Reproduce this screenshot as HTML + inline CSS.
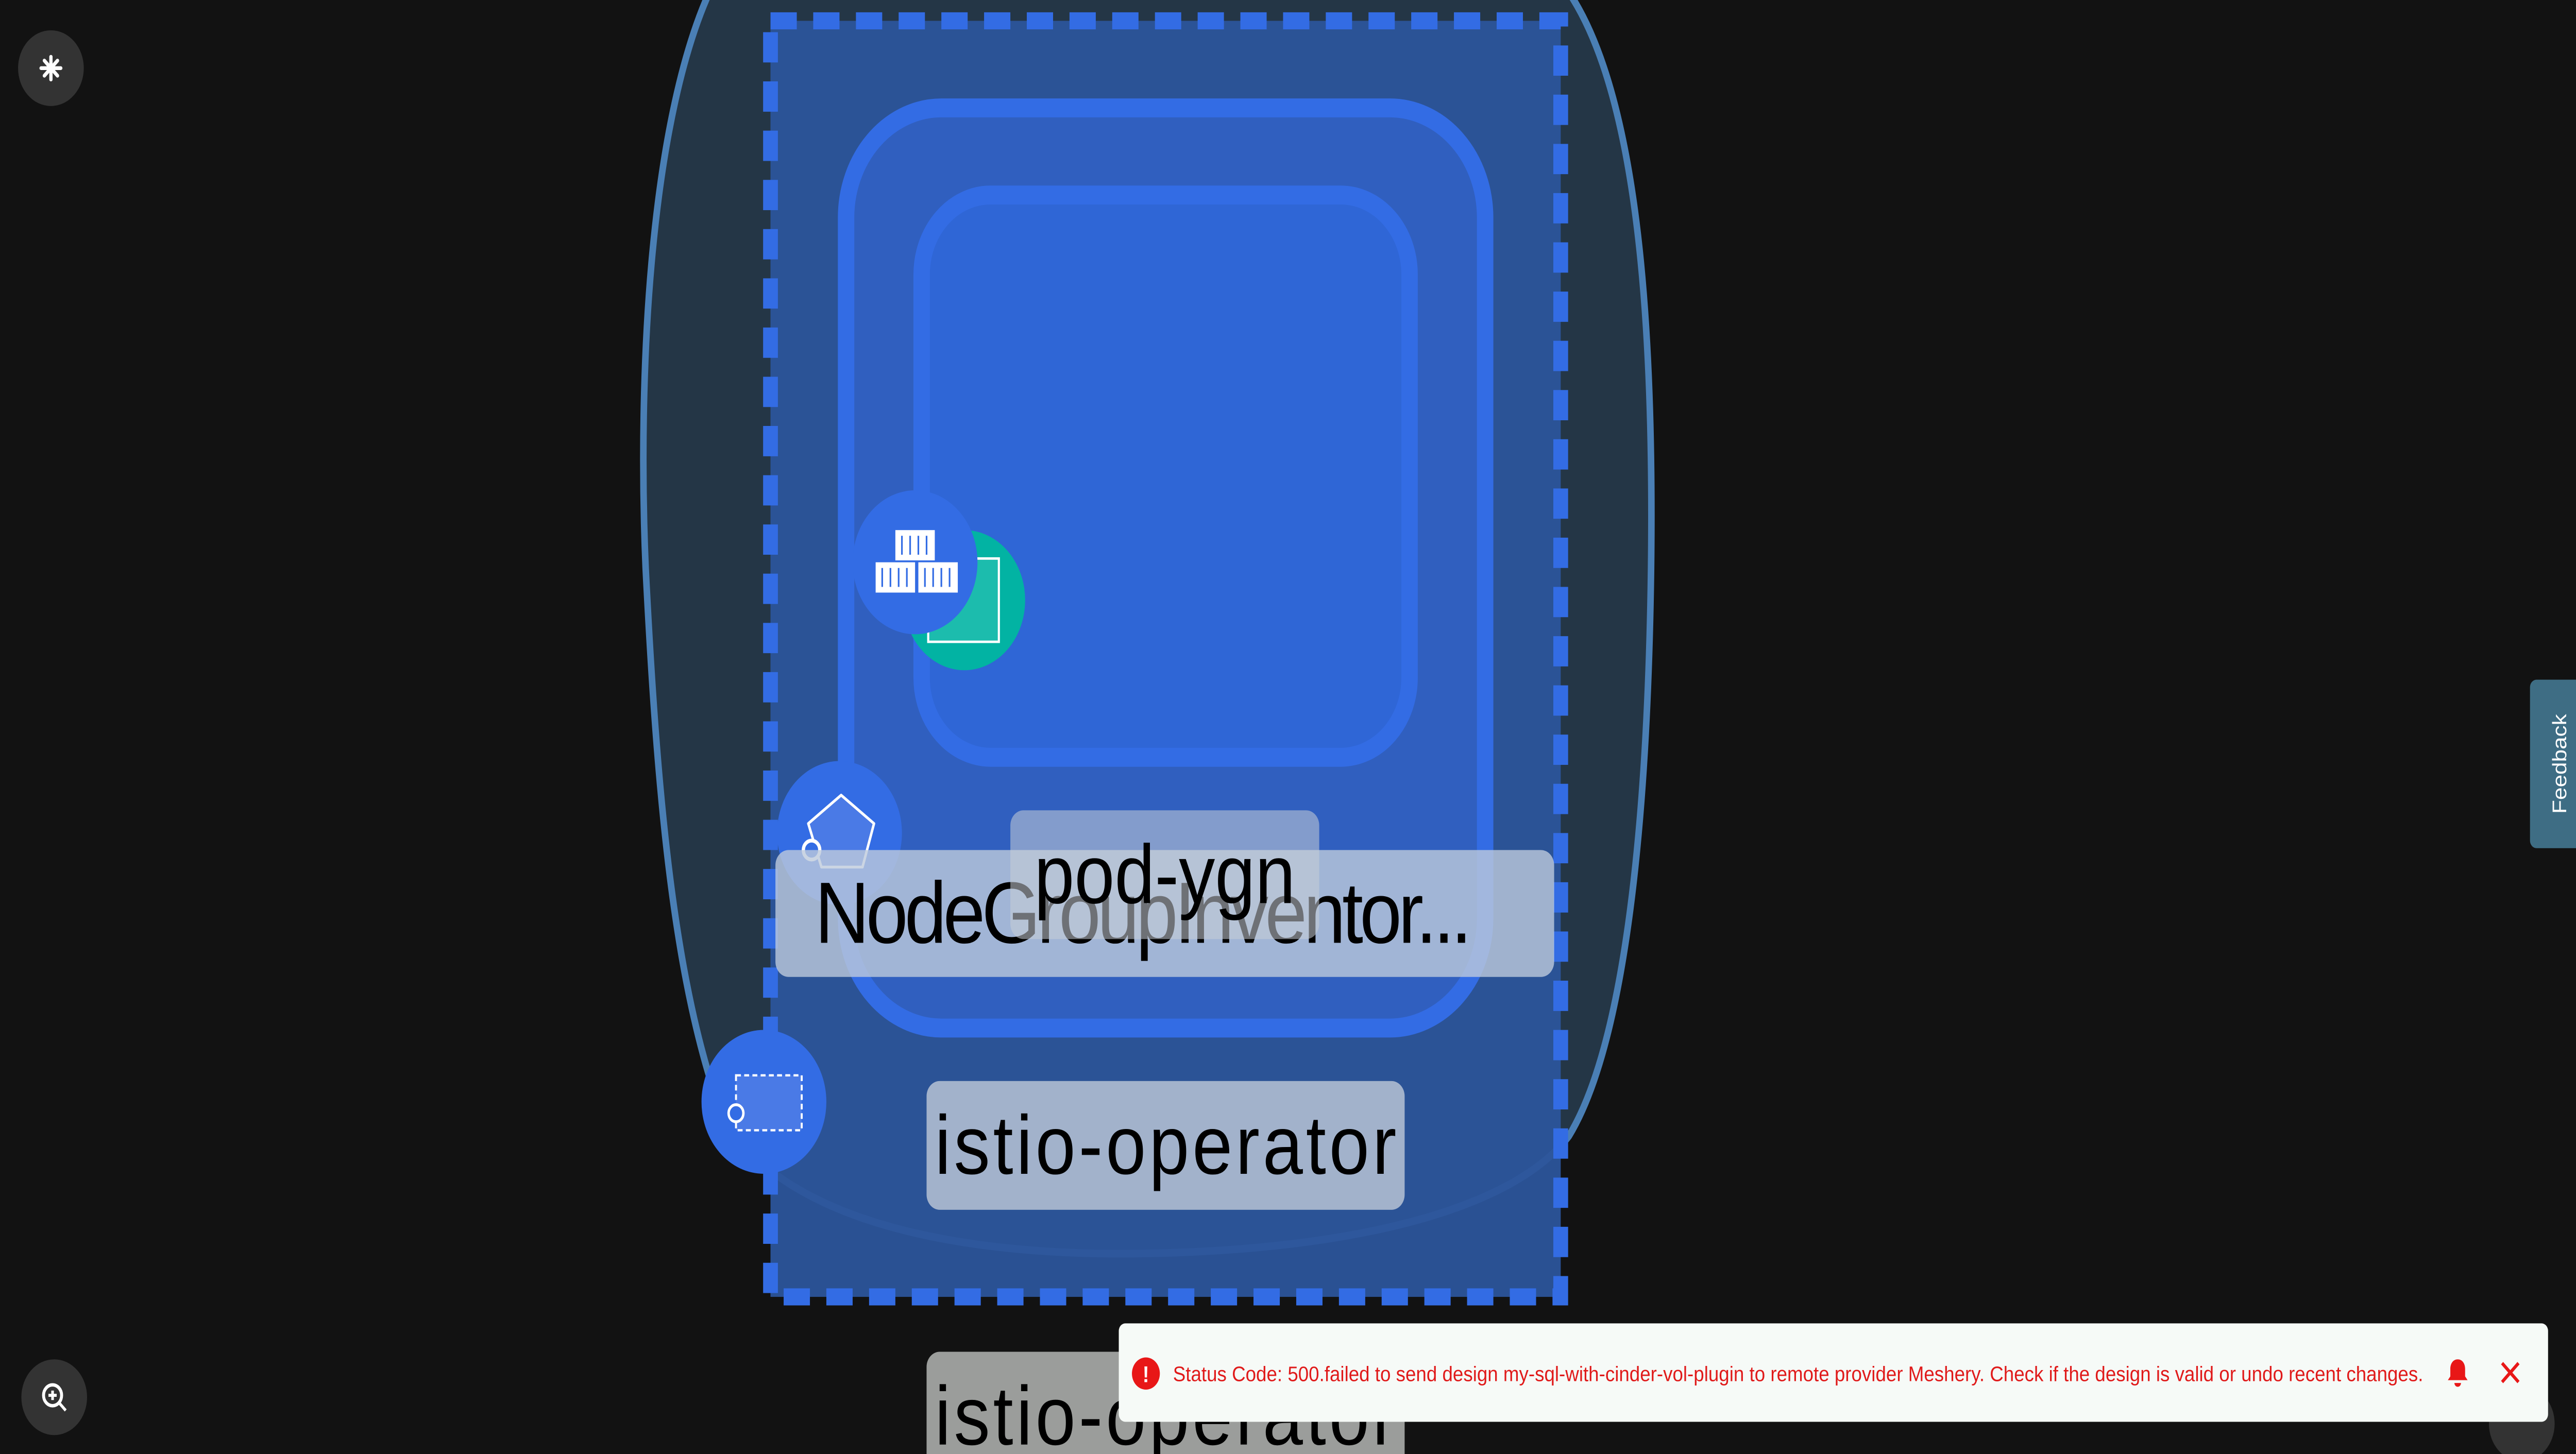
<!DOCTYPE html>
<html><head><meta charset="utf-8"><style>
html,body{margin:0;padding:0;background:#121212;overflow:hidden;width:100%;height:100%}
svg{display:block;position:fixed;left:0;top:0;width:100vw;height:100vh;font-family:"Liberation Sans",sans-serif}
</style></head><body>
<svg viewBox="0 0 1568 768" preserveAspectRatio="none">
<rect width="1568" height="768" fill="#121212"/>
<path d="M435 -10 C395 60 388 200 393 300 C400 420 410 520 440 590 C480 650 600 664 700 662 C820 660 920 640 955 600 C990 550 1003 430 1005 300 C1007 160 995 40 950 -10 Z" fill="#243646" stroke="#4a7fb5" stroke-width="4"/>
<rect x="469" y="11" width="481" height="674" fill="#2c559b" fill-opacity="0.95" stroke="#336ce4" stroke-width="9" stroke-dasharray="16 10"/>
<rect x="515" y="57" width="389" height="486" rx="58" fill="#305fbf" stroke="#336ce4" stroke-width="10"/>
<rect x="561" y="103" width="297" height="297" rx="42" fill="#2f66d6" stroke="#336ce4" stroke-width="10"/>
<circle cx="587" cy="317" r="37" fill="#02b3a3"/>
<rect x="565" y="295" width="43" height="44" fill="#1cbcad" stroke="#fff" stroke-width="1.3"/>
<circle cx="557" cy="297" r="38" fill="#336ce4"/>
<g fill="#fff"><rect x="545" y="280" width="24" height="16"/><rect x="533" y="297" width="24" height="16"/><rect x="559" y="297" width="24" height="16"/></g>
<g stroke="#336ce4" stroke-width="1"><path d="M549 283v10M554 283v10M559 283v10M564 283v10M537 300v10M542 300v10M547 300v10M552 300v10M563 300v10M568 300v10M573 300v10M578 300v10"/></g>
<circle cx="511" cy="440" r="38" fill="#336ce4"/>
<path d="M512 420 L532 435 L525 458 L500 458 L492 435 Z" fill="#4a7ae6" stroke="#fff" stroke-width="1.5" stroke-linejoin="round"/>
<circle cx="494" cy="449" r="5" fill="#336ce4" stroke="#fff" stroke-width="2"/>
<circle cx="465" cy="582" r="38" fill="#336ce4"/>
<rect x="448" y="568" width="40" height="29" fill="#4a7ae6" stroke="#fff" stroke-width="1.2" stroke-dasharray="3 2"/>
<circle cx="448" cy="588" r="4.5" fill="#336ce4" stroke="#fff" stroke-width="1.5"/>
<circle cx="31" cy="36" r="20" fill="#333"/>
<g stroke="#fff" stroke-width="2" stroke-linecap="round"><path d="M31 30v12M25 36h12M27 32l8 8M35 32l-8 8"/></g>
<circle cx="33" cy="738" r="20" fill="#333"/>
<circle cx="32" cy="737" r="5.5" fill="none" stroke="#fff" stroke-width="1.8"/>
<path d="M36 741l4 4M29.5 737h5M32 734.5v5" stroke="#fff" stroke-width="1.6"/>
<circle cx="1535" cy="752" r="20" fill="#333"/>

<rect x="472" y="449" width="474" height="67" rx="8" fill="rgb(190,202,220)" fill-opacity="0.8"/>
<text x="496" y="498" font-size="46" fill="#000" textLength="400">NodeGroupInventor...</text>
<rect x="615" y="428" width="188" height="68" rx="8" fill="rgb(200,205,215)" fill-opacity="0.55"/>
<text x="709" y="477" font-size="44" fill="#000" text-anchor="middle">pod-ygn</text>
<rect x="564" y="571" width="291" height="68" rx="8" fill="#a2b2cb"/>
<text x="569" y="620" font-size="44" fill="#000" textLength="281">istio-operator</text>
<rect x="564" y="714" width="291" height="70" rx="8" fill="#9b9d9b"/>
<text x="569" y="763" font-size="44" fill="#000" textLength="281">istio-operator</text>

<rect x="1540" y="359" width="32" height="89" rx="4" fill="#3e6d84"/>
<text transform="translate(1562 403.5) rotate(-90)" font-size="12" fill="#fff" text-anchor="middle">Feedback</text>

<rect x="681" y="699" width="870" height="52" rx="4" fill="#f6faf7"/>
<circle cx="697.5" cy="725.5" r="8.5" fill="#e81717"/>
<text x="697.5" y="730" font-size="12" font-weight="bold" fill="#fff" text-anchor="middle">!</text>
<text x="714" y="729.5" font-size="11" fill="#e01a1a" textLength="761" lengthAdjust="spacingAndGlyphs">Status Code: 500.failed to send design my-sql-with-cinder-vol-plugin to remote provider Meshery. Check if the design is valid or undo recent changes.</text>
<path d="M1496 718c-3 0-4.5 2.5-4.5 5v4l-1.5 2h12l-1.5-2v-4c0-2.5-1.5-5-4.5-5z M1494 730.5a2 2 0 004 0z" fill="#e81717"/>
<path d="M1523 720l10 10M1533 720l-10 10" stroke="#e81717" stroke-width="1.8"/>
</svg>
</body></html>
